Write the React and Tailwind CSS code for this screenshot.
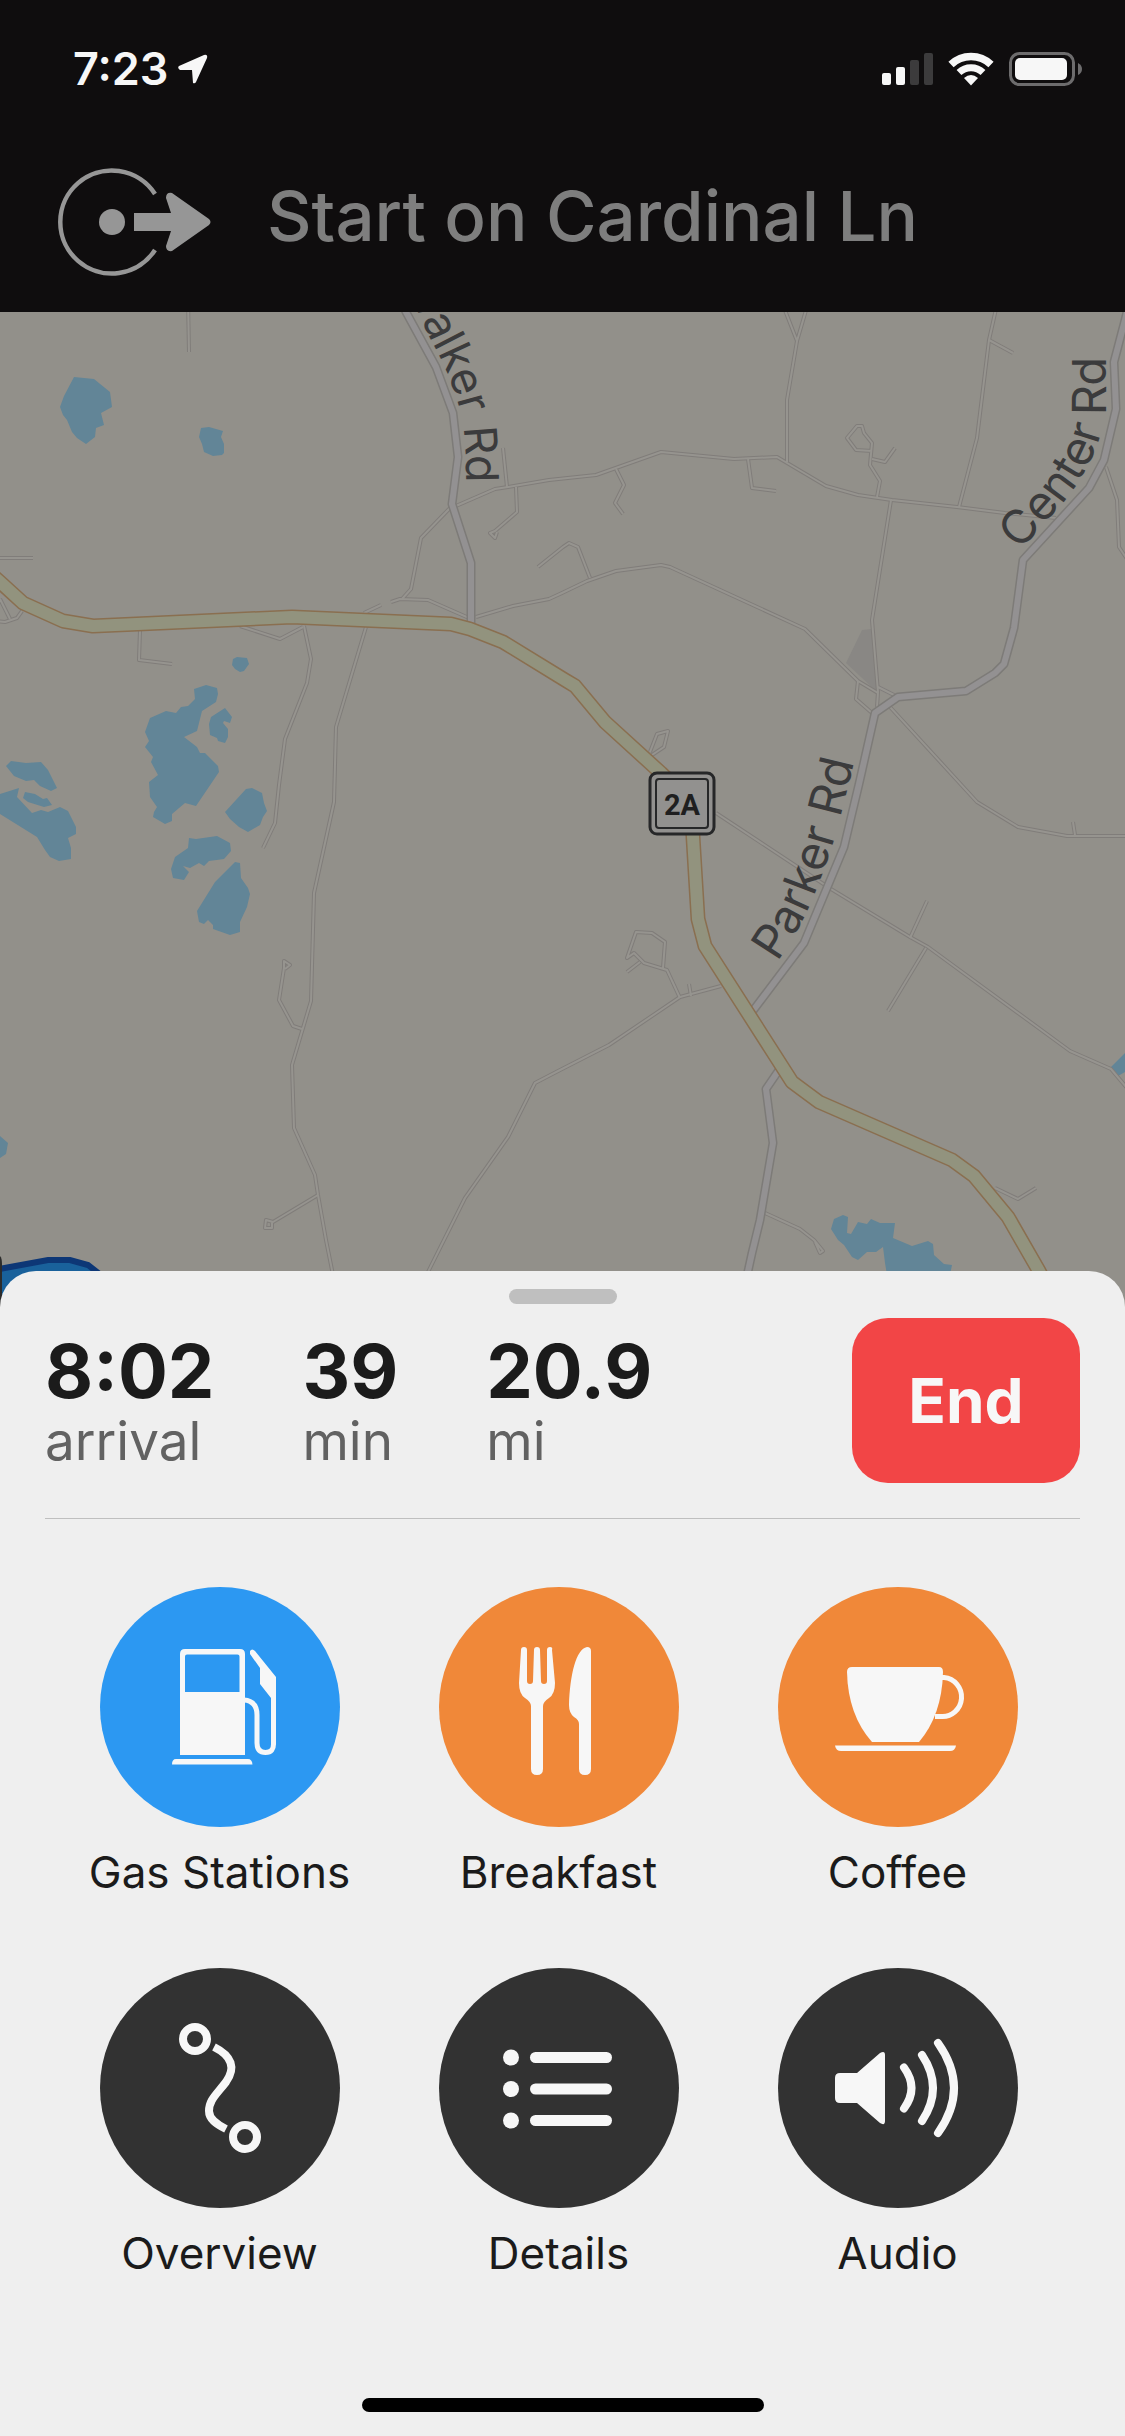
import React from 'react';

const LAKES = [
  '74,377 94,379 110,392 112,407 101,413 104,425 96,428 95,437 86,444 77,438 72,432 67,420 63,415 60,407 64,396',
  '201,428 209,427 223,431 221,437 224,444 224,453 222,455 213,456 204,452 202,444 199,437',
  '233,659 237,657 247,658 249,664 244,671 240,672 235,669 232,665',
  '194,689 206,685 217,688 218,694 216,702 202,711 197,731 184,737 197,747 200,753 205,753 218,766 219,772 196,806 185,803 172,814 172,821 165,824 153,817 154,812 157,807 150,797 149,782 158,775 151,762 153,757 145,747 149,741 145,732 150,718 166,711 176,713 181,707 188,706 195,699',
  '225,708 232,717 230,723 224,721 223,723 228,729 228,737 225,743 218,741 217,738 210,735 209,724 211,717',
  '11,761 26,763 41,762 48,770 57,788 51,791 40,786 34,780 26,781 14,776 6,766',
  '0,794 19,788 17,797 32,813 41,810 48,812 60,807 68,811 76,827 76,834 68,838 71,848 71,859 59,861 50,857 45,850 37,837 0,814',
  '25,792 35,794 43,799 47,798 52,805 44,807 28,802 23,798',
  '225,812 246,789 252,788 262,793 264,803 267,811 263,817 260,825 248,832 239,827 230,819',
  '189,838 196,839 217,836 230,843 231,851 224,859 209,861 204,866 199,863 190,868 183,866 189,872 184,880 173,878 171,869 175,857 188,848',
  '235,862 240,863 241,878 248,888 250,894 247,907 240,922 240,932 230,935 213,929 213,925 208,920 204,924 199,922 197,911 215,882',
  '0,1136 8,1143 6,1154 0,1158',
  '843,1215 848,1217 847,1233 851,1234 858,1222 867,1224 871,1219 880,1223 895,1223 893,1238 912,1246 928,1241 933,1244 934,1255 944,1264 952,1265 950,1275 887,1275 885,1263 883,1247 876,1252 867,1252 858,1260 852,1257 844,1245 838,1240 831,1229 834,1219',
  '1125,1053 1111,1067 1118,1076 1125,1072',
];

const LANES = [
  '188,300 189,352',
  '-5,558 33,558',
  '0,599 10,619',
  '-5,621 5,622 17,618 22,611',
  '140,630 139,660 172,664',
  '240,626 280,639 303,627',
  '304,626 311,659 307,683 285,739 279,785 275,823 263,848',
  '366,627 336,727 334,802 314,893 311,1001 292,1065 294,1128 315,1175 318,1195 326,1240 334,1280',
  '364,613 381,605',
  '391,602 400,599 428,600 469,618',
  '402,599 411,589 421,538 449,509 495,489 508,487 549,480 596,475 661,452 734,459 777,457 826,486 858,495 892,500 957,507 1005,513 1056,518',
  '503,448 507,487',
  '516,487 517,512 495,531 490,533 495,538 497,532',
  '476,617 513,606 549,599 562,593 587,581 616,571 661,565 670,567 805,629 858,681 878,693',
  '538,567 563,547 569,543 578,547 590,578',
  '616,469 624,485 615,503 623,514',
  '748,459 752,488 776,491',
  '781,300 797,341 809,300',
  '797,341 787,400 787,462',
  '998,300 989,340 977,438 959,507',
  '989,340 1013,353',
  '877,497 880,481 870,465 872,443 864,433 862,426 857,426 847,438 856,450 872,451',
  '872,459 885,462 895,448',
  '891,500 872,620 878,692 877,707',
  '858,681 856,699 872,713',
  '878,687 894,695',
  '890,707 977,802 1018,827 1067,836 1130,836',
  '1073,822 1075,835',
  '1106,467 1117,500 1119,547 1127,559',
  '650,752 657,734 668,731 664,747 652,755',
  '716,813 831,889 910,937 928,947 1070,1051 1111,1069 1127,1088',
  '927,901 910,938',
  '926,948 888,1011',
  '721,986 680,997 609,1045 562,1069 535,1083 508,1137 465,1198 424,1280',
  '689,984 691,996',
  '680,998 667,970 644,963 634,953 627,958 636,932 652,933 665,942 663,968',
  '627,972 640,962',
  '995,1188 1018,1199 1036,1188',
  '765,1213 800,1229 814,1240 823,1251 820,1253 815,1242',
  '302,1029 293,1026 279,1000 284,968 284,961 290,965 285,969',
  '318,1195 273,1222 266,1220 265,1228 272,1228 272,1222',
];

const ROADS = [
  '400,300 406,312 436,367 453,413 458,457 452,504 471,563 471,623',
  '1130,300 1125,320 1114,362 1116,409 1104,460 1089,488 1023,560 1014,628 1004,664 995,673 966,691 898,697 875,713 859,784 844,847 804,943 752,1012',
  '779,1070 766,1089 773,1143 760,1220 752,1253 745,1285',
];

const HIGHWAY =
  '-10,573 0,582 23,603 63,621 93,626 292,617 451,624 470,629 503,642 565,680 575,686 605,722 661,773 691,802 693,837 698,919 705,946 792,1082 819,1102 952,1160 974,1176 1008,1217 1039,1271 1058,1307';

function RouteMap() {
  return (
    <svg
      className="block w-full h-[1000px] bg-[#92908a]"
      viewBox="0 312 1125 1000"
      preserveAspectRatio="xMidYMin slice"
      role="img"
      aria-label="Route map"
    >
      <polygon points="862,630 871,629 877,692 846,663" fill="#898784" />

      <g fill="#628597">
        {LAKES.map((points) => (
          <polygon key={points} points={points} />
        ))}
      </g>

      <g fill="none" strokeLinejoin="round">
        <g stroke="#807d7a" strokeWidth="4">
          {LANES.map((points) => (
            <polyline key={points} points={points} />
          ))}
        </g>
        <g stroke="#96948f" strokeWidth="2">
          {LANES.map((points) => (
            <polyline key={points} points={points} />
          ))}
        </g>
        <g stroke="#7d7b78" strokeWidth="9">
          {ROADS.map((points) => (
            <polyline key={points} points={points} />
          ))}
        </g>
        <g stroke="#939192" strokeWidth="6">
          {ROADS.map((points) => (
            <polyline key={points} points={points} />
          ))}
        </g>
        <polyline points={HIGHWAY} stroke="#8a6f50" strokeWidth="15" />
        <polyline points={HIGHWAY} stroke="#92937e" strokeWidth="12" />
      </g>

      {/* current route, mostly under the sheet */}
      <path d="M-6 1270 L48 1260 H70 L88 1265 L120 1290 V1320 H-6 Z" fill="#19619b" stroke="#0d3776" strokeWidth="6" />
      <path d="M0 1256 q2 2 2 8 V1320 H0 Z" fill="#2c2c2c" />

      <defs>
        <path id="walker" d="M346 158 L430 338 C445 365 456 392 462 418 Q466 440 466 483" />
        <path id="center" d="M1020 551 L1066 499 C1092 466 1106 430 1106 400 V330" />
        <path id="parker" d="M770 972 C804 926 816 894 832 846 C840 820 847 790 857 750" />
      </defs>
      <g className="font-[Inter,sans-serif]" fill="#3b3b3c">
        <text textAnchor="end" fontSize="45">
          <textPath href="#walker" startOffset="100%">Walker Rd</textPath>
        </text>
        <text fontSize="47">
          <textPath href="#center">Center Rd</textPath>
        </text>
        <text textAnchor="middle" fontSize="47">
          <textPath href="#parker" startOffset="50%">Parker Rd</textPath>
        </text>
      </g>

      <rect x="650" y="773" width="64" height="61" rx="7" fill="#92918f" stroke="#262728" strokeWidth="3" />
      <rect x="656" y="779" width="52" height="49" rx="3" fill="#92918f" stroke="#262728" strokeWidth="2" />
      <text
        className="font-[Roboto,sans-serif] font-bold"
        x="682"
        y="815"
        textAnchor="middle"
        fontSize="29"
        fill="#1f1f20"
      >
        2A
      </text>
    </svg>
  );
}

function StatusBar() {
  return (
    <div className="flex items-center justify-between h-[138px] pl-[73px] pr-[42px]">
      <div className="flex items-center gap-[10px] text-[#f7f7f7]">
        <span className="text-[45px] leading-[60px] font-semibold">7:23</span>
        <svg className="w-[30px] h-[30px]" viewBox="0 0 30 30" fill="currentColor" aria-hidden="true">
          <path d="M1 12 L26 1 Q30 0 29 4 L18 28 Q17 30 15 29 L14 16 H2 Q-1 14 1 12 Z" />
        </svg>
      </div>
      <div className="flex items-center gap-[15px] text-[#f7f7f7]">
        <svg className="w-[51px] h-[34px]" viewBox="0 0 51 34" fill="currentColor" aria-hidden="true">
          <rect x="0" y="21" width="9" height="12" rx="2" />
          <rect x="14" y="15" width="9" height="18" rx="2" />
          <rect x="28" y="8" width="9" height="25" rx="2" fill="#3c3b3c" />
          <rect x="42" y="1" width="9" height="32" rx="2" fill="#3c3b3c" />
        </svg>
        <svg className="w-[46px] h-[34px]" viewBox="0 0 46 34" fill="none" aria-hidden="true">
          <path d="M3 12.5 A29 29 0 0 1 43 12.5" stroke="currentColor" strokeWidth="7.5" />
          <path d="M11 20.5 A17.5 17.5 0 0 1 35 20.5" stroke="currentColor" strokeWidth="7" />
          <path d="M16 26 Q23 20 30 26 L23 33.5 Z" fill="currentColor" />
        </svg>
        <svg className="w-[74px] h-[34px]" viewBox="0 0 74 34" aria-hidden="true">
          <rect x="1.5" y="1.5" width="63" height="31" rx="9" fill="none" stroke="#6d6c6d" strokeWidth="3" />
          <rect x="6" y="6" width="52" height="22" rx="5" fill="currentColor" />
          <path d="M69 11 Q73 13 73 17 T69 23 Z" fill="#6d6c6d" />
        </svg>
      </div>
    </div>
  );
}

function DirectionBanner() {
  return (
    <div className="flex items-center gap-[55px] h-[174px] pl-14 pb-[6px]">
      <svg className="w-[156px] h-[112px]" viewBox="0 0 156 112" aria-hidden="true">
        <path d="M99 28 A51.5 51.5 0 1 0 99 84" fill="none" stroke="#969696" strokeWidth="4.5" />
        <circle cx="56" cy="56" r="13" fill="#969696" />
        <path
          d="M78 47 H115 L110 32 Q110 26 116 27 L153 53 Q156 56 153 59 L116 85 Q110 86 110 80 L115 65 H78 Z"
          fill="#969696"
        />
      </svg>
      <h1 className="pb-3 text-[69px] leading-[88px] font-medium text-[#7e7e7e]">Start on Cardinal Ln</h1>
    </div>
  );
}

function GasIcon() {
  return (
    <>
      <path
        d="M85 62 H140 Q145 62 145 67 V168 H80 V67 Q80 62 85 62 Z M87 67.5 Q85 67.5 85 69.5 V105 H139.5 V69.5 Q139.5 67.5 137.5 67.5 Z"
        fillRule="evenodd"
      />
      <path d="M76 172 H148 Q152 172 152.5 177.5 H72 Q72 172 76 172 Z" />
      <path d="M150 64 Q152 61 155 64 L176 90 V112 L171 111 L160 97 V81 L150 67 Z" />
      <path
        d="M144 113 Q157 114 157 128 V156 Q157 165.5 165.5 165.5 T173.5 156 V98"
        fill="none"
        stroke="currentColor"
        strokeWidth="5"
      />
    </>
  );
}

function ForkKnifeIcon() {
  return (
    <>
      <path d="M82 63 Q82 60 85 60 T88 63 V94 Q88 97 91 97 T94 94 L95 63 Q95 60 98 60 T101 63 L102 94 Q102 97 105 97 T108 94 V63 Q108 60 111 60 T113 63 L116 96 Q116 107 110 111 Q104 115 104 119 V182 Q104 188 98 188 T92 182 V119 Q92 115 86 111 Q80 107 80 96 Z" />
      <path d="M152 64 Q152 60 148 60 C137 62 131 88 130 118 Q130 126 135 130 Q140 133 140 137 V182 Q140 188 146 188 T152 182 Z" />
    </>
  );
}

function CoffeeIcon() {
  return (
    <>
      <path d="M74 80 H161 Q165 80 165 85 Q164 128 141 155 H94 Q70 128 69 85 Q69 80 74 80 Z" />
      <path d="M163 90.5 H166 A19 19.5 0 0 1 163 129.5 H157" fill="none" stroke="currentColor" strokeWidth="5" />
      <path d="M57 158.5 H178 Q177 164 172 164 H63 Q58 164 57 158.5 Z" />
    </>
  );
}

function OverviewIcon() {
  return (
    <g fill="none" stroke="currentColor" strokeWidth="8">
      <circle cx="95" cy="71" r="12" />
      <circle cx="145" cy="169" r="12" />
      <path d="M114 79 C132 88 136 100 126 114 C116 127 109 132 109 143 C109 151 116 156 126 161" />
    </g>
  );
}

function DetailsIcon() {
  return (
    <>
      <circle cx="72" cy="89.5" r="8" />
      <circle cx="72" cy="121" r="8" />
      <circle cx="72" cy="152.5" r="8" />
      <rect x="91" y="84" width="82" height="11" rx="5.5" />
      <rect x="91" y="115.5" width="82" height="11" rx="5.5" />
      <rect x="91" y="147" width="82" height="11" rx="5.5" />
    </>
  );
}

function AudioIcon() {
  return (
    <>
      <path d="M62 105 H79 L102 85 Q107 82 107 87 V153 Q107 158 102 155 L79 135 H62 Q57 135 57 130 V110 Q57 105 62 105 Z" />
      <g fill="none" stroke="currentColor" strokeWidth="8" strokeLinecap="round">
        <path d="M126 99.5 Q141 120 126 140.5" />
        <path d="M144 87 Q166 120 144 153" />
        <path d="M160 75 Q192 120 160 165" />
      </g>
    </>
  );
}

const stats = [
  { value: '8:02', label: 'arrival' },
  { value: '39', label: 'min' },
  { value: '20.9', label: 'mi' },
];

const actions = [
  { label: 'Gas Stations', color: 'bg-[#2c98f2]', Icon: GasIcon },
  { label: 'Breakfast', color: 'bg-[#f08839]', Icon: ForkKnifeIcon },
  { label: 'Coffee', color: 'bg-[#f08839]', Icon: CoffeeIcon },
  { label: 'Overview', color: 'bg-[#323232]', Icon: OverviewIcon },
  { label: 'Details', color: 'bg-[#323232]', Icon: DetailsIcon },
  { label: 'Audio', color: 'bg-[#323232]', Icon: AudioIcon },
];

function RouteSheet() {
  return (
    <section className="relative flex flex-col grow -mt-[41px] rounded-t-[36px] bg-[#efefef] pt-[18px] pb-6">
      <div className="self-center w-[108px] h-[15px] rounded-full bg-[#bfbfbf]" />

      <div className="flex items-center justify-between mx-[45px] pt-[14px] pb-[35px] border-b border-[#bfbfbf]">
        <dl className="flex gap-[88px] pt-[6px]">
          {stats.map(({ value, label }) => (
            <div key={label} className="flex flex-col-reverse">
              <dt className="text-[53px] leading-[66px] text-[#626262]">{label}</dt>
              <dd className="text-[74px] leading-[74px] font-bold text-[#1b1b1b]">{value}</dd>
            </div>
          ))}
        </dl>
        <button type="button" className="w-[228px] h-[165px] rounded-[36px] bg-[#f24546] text-[62px] font-bold text-[#f7f7f7]">
          End
        </button>
      </div>

      <div className="grid grid-cols-3 gap-y-[66px] pt-[68px] pl-[50px] pr-[58px]">
        {actions.map(({ label, color, Icon }) => (
          <button key={label} type="button" className="flex flex-col items-center gap-[15px]">
            <span className={`block size-[240px] rounded-full text-[#f7f7f7] ${color}`}>
              <svg className="size-full" viewBox="0 0 240 240" fill="currentColor" aria-hidden="true">
                <Icon />
              </svg>
            </span>
            <span className="text-[44px] leading-[60px] text-[#1b1b1b]">{label}</span>
          </button>
        ))}
      </div>

      <div className="self-center mt-auto w-[402px] h-[14px] rounded-full bg-black" />
    </section>
  );
}

function App() {
  return (
    <main className="flex flex-col min-h-screen bg-[#0f0d0e] font-[Inter,sans-serif]">
      <header>
        <StatusBar />
        <DirectionBanner />
      </header>
      <RouteMap />
      <RouteSheet />
    </main>
  );
}

export default App;
